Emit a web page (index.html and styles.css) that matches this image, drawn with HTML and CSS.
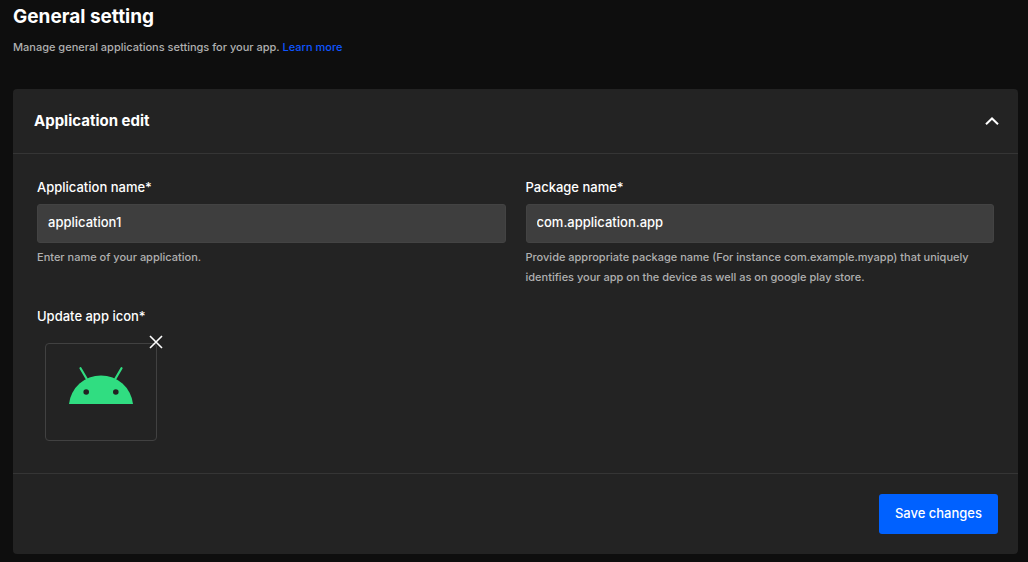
FILE: index.html
```
<!DOCTYPE html>
<html lang="en">
<head>
<meta charset="utf-8">
<meta name="viewport" content="width=device-width, initial-scale=1">
<title>General setting</title>
<link rel="stylesheet" href="styles.css">
</head>
<body>
<main class="page">
  <header class="page-header">
    <h1 class="page-title">General setting</h1>
    <p class="page-intro">Manage general applications settings for your app. <a class="link" href="#">Learn more</a></p>
  </header>
  <form class="card">
    <div class="card-header">
      <h2 class="card-title">Application edit</h2>
      <button class="icon-button" type="button" aria-label="Collapse section" aria-expanded="true">
        <svg width="14" height="8" viewBox="0 0 14 8" fill="none" stroke="currentColor" stroke-width="2"><path d="M1 7.2 7 1.5l6 5.7"/></svg>
      </button>
    </div>
    <div class="card-body">
      <div class="field">
        <label class="label" for="app-name">Application name*</label>
        <input class="input" id="app-name" type="text" value="application1" aria-describedby="app-name-help">
        <p class="help" id="app-name-help">Enter name of your application.</p>
      </div>
      <div class="field">
        <label class="label" for="package-name">Package name*</label>
        <input class="input" id="package-name" type="text" value="com.application.app" aria-describedby="package-name-help">
        <p class="help" id="package-name-help">Provide appropriate package name (For instance com.example.myapp) that uniquely identifies your app on the device as well as on google play store.</p>
      </div>
      <div class="field">
        <span class="label">Update app icon*</span>
        <div class="app-icon">
          <svg width="64" height="38" viewBox="0 0 64 38" role="img" aria-label="Android">
            <path d="M0 38A32.200 32.200 0 0 1 64 38Z" fill="#30dd81"/>
            <path d="M11.500 2.200 17.800 13M52.500 2.200 46.200 13" stroke="#30dd81" stroke-width="2.200" stroke-linecap="round"/>
            <circle cx="17.200" cy="26" r="2.800" fill="#232323"/>
            <circle cx="46.800" cy="26" r="2.800" fill="#232323"/>
          </svg>
          <button class="remove" type="button" aria-label="Remove icon">
            <svg width="14" height="14" viewBox="0 0 14 14" fill="none" stroke="currentColor" stroke-width="1.600"><path d="m1 1 12 12M13 1 1 13"/></svg>
          </button>
        </div>
      </div>
    </div>
    <div class="card-footer">
      <button class="save" type="submit">Save changes</button>
    </div>
  </form>
</main>
</body>
</html>
```
FILE: styles.css
```
* { box-sizing: border-box; }
body {
  margin: 0;
  background: #0e0e0e;
  color: #fff;
  font-family: Inter, "Liberation Sans", sans-serif;
}
h1, h2, p { margin: 0; }
button { border: 0; padding: 0; background: none; color: inherit; font: inherit; cursor: pointer; }
svg { display: block; }

.page { padding: 5px 10px 8px 13px; }
.page-header { margin-bottom: 32px; }
.page-title { font-size: 19px; font-weight: 700; line-height: 24px; }
.page-intro { margin-top: 8px; font-size: 11px; font-weight: 500; line-height: 20px; color: #b0b0b0; }
.link { color: #0f55ff; text-decoration: none; }

.card { background: #232323; border-radius: 4px; }
.card-header {
  display: flex;
  align-items: center;
  justify-content: space-between;
  padding: 20px 19px 20px 21px;
  border-bottom: 1px solid #353535;
}
.card-title { font-size: 15px; font-weight: 700; line-height: 24px; }

.card-body {
  display: grid;
  grid-template-columns: 1fr 1fr;
  gap: 19px 20px;
  padding: 23px 24px 32px;
}
.field { min-width: 0; }
.label { display: block; margin-bottom: 7px; font-size: 13px; font-weight: 500; line-height: 20px; }
.input {
  display: block;
  width: 100%;
  height: 39px;
  padding: 0 10px 3px;
  border: 1px solid #434343;
  border-radius: 3px;
  background: #3e3e3e;
  color: #fff;
  font: inherit;
  font-size: 13px;
  font-weight: 500;
}
.help { margin-top: 4px; font-size: 11px; font-weight: 500; line-height: 20px; color: #b0b0b0; }

.app-icon {
  position: relative;
  display: flex;
  justify-content: center;
  width: 112px;
  height: 98px;
  margin: 17px 0 0 8px;
  padding-top: 22px;
  border: 1px solid #414141;
  border-radius: 4px;
}
.remove { position: absolute; top: -10px; right: -8px; padding: 1px; }

.card-footer {
  display: flex;
  justify-content: flex-end;
  padding: 20px;
  border-top: 1px solid #353535;
}
.save {
  padding: 9px 16px 11px;
  border-radius: 3px;
  background: #0061ff;
  font-size: 13px;
  font-weight: 500;
  line-height: 20px;
}
```
